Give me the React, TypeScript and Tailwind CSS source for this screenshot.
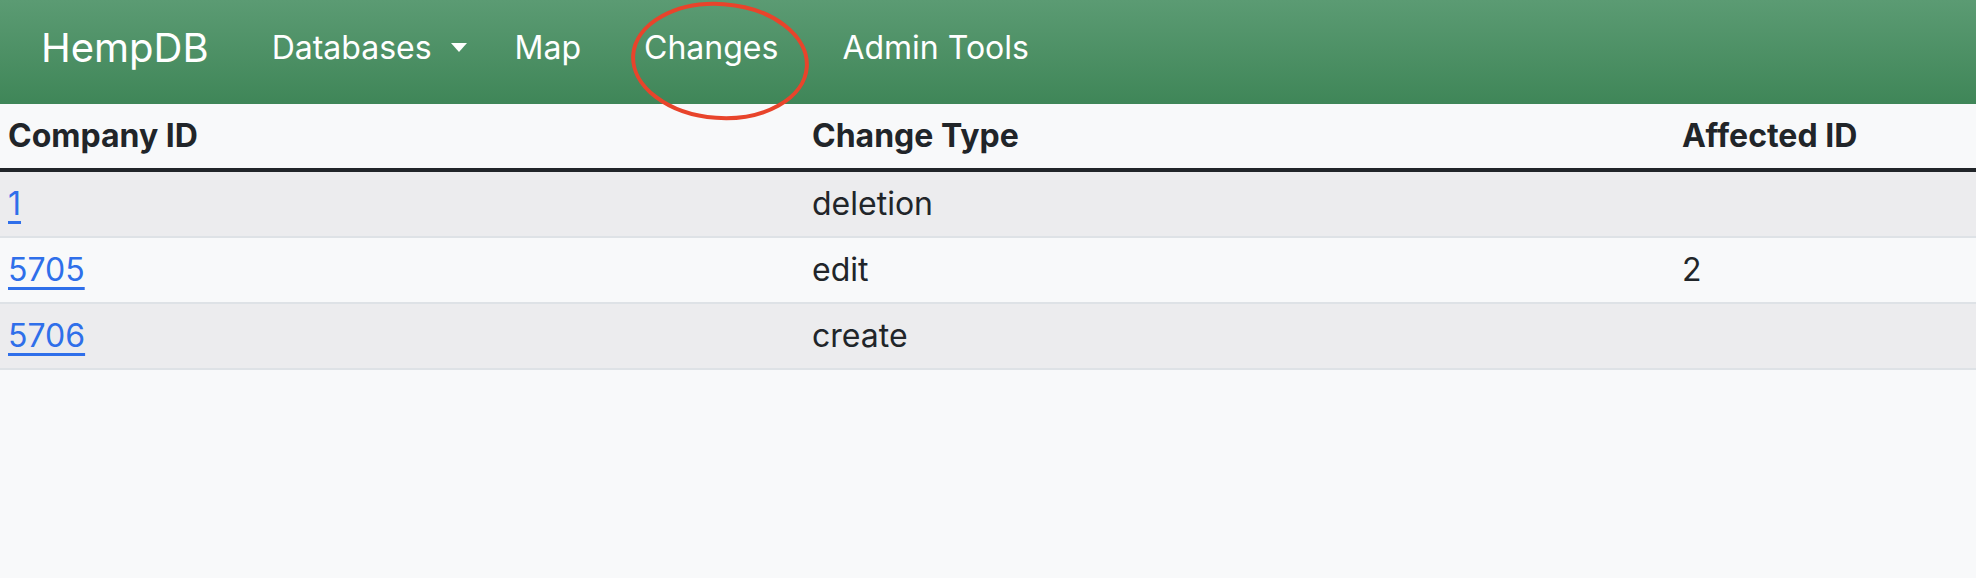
import React from "react";

const rows = [
  { id: "1", type: "deletion", affected: "" },
  { id: "5705", type: "edit", affected: "2" },
  { id: "5706", type: "create", affected: "" },
];

export default function App() {
  return (
    <div
      className="min-h-[578px] w-full bg-[#f8f9fa] text-[#212529]"
      style={{ fontFamily: "Inter, 'Noto Sans', sans-serif" }}
    >
      <nav className="relative flex h-[104px] items-center bg-gradient-to-b from-[#5b9b73] to-[#3f8658] pb-[9px] pl-[41px] text-white">
        <span className="text-[40px] leading-none">HempDB</span>
        <div className="ml-[63px] flex items-center text-[32px] leading-none">
          <span className="flex items-center">
            Databases
            <span className="ml-[19px] h-0 w-0 border-x-[8px] border-t-[9px] border-x-transparent border-t-white" />
          </span>
          <span className="ml-[48px]">Map</span>
          <span className="ml-[63px]">Changes</span>
          <span className="ml-[64px]">Admin Tools</span>
        </div>
        <svg
          className="pointer-events-none absolute left-[629px] top-[1px] z-10"
          width="182"
          height="122"
          viewBox="0 0 182 122"
        >
          <ellipse cx="91" cy="60" rx="87" ry="57" fill="none" stroke="#e8442b" strokeWidth="4" transform="rotate(4 91 60)" />
        </svg>
      </nav>
      <table className="w-full border-collapse text-left text-[32px]">
        <colgroup>
          <col className="w-[804px]" />
          <col className="w-[870px]" />
          <col />
        </colgroup>
        <thead>
          <tr className="border-b-4 border-[#212529]">
            <th className="px-[8px] py-[11px] font-bold leading-[42px]">Company ID</th>
            <th className="px-[8px] py-[11px] font-bold leading-[42px]">Change Type</th>
            <th className="px-[8px] py-[11px] font-bold leading-[42px]">Affected ID</th>
          </tr>
        </thead>
        <tbody>
          {rows.map((r, i) => (
            <tr key={r.id} className={`border-b-2 border-[#dee2e6] ${i % 2 === 0 ? "bg-[#ececee]" : "bg-[#f8f9fa]"}`}>
              <td className="px-[8px] py-[11px] leading-[42px]">
                <a href="#" className="text-[#2f6fea] underline decoration-[3px] underline-offset-[6px]">
                  {r.id}
                </a>
              </td>
              <td className="px-[8px] py-[11px] leading-[42px]">{r.type}</td>
              <td className="px-[8px] py-[11px] leading-[42px]">{r.affected}</td>
            </tr>
          ))}
        </tbody>
      </table>
    </div>
  );
}
